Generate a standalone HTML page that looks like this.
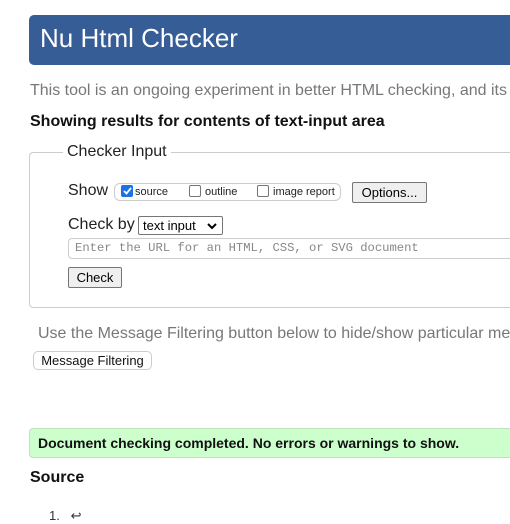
<!DOCTYPE html>
<html><head><style>
body{margin:0;width:510px;height:523px;overflow:hidden;background:#fff;font-family:"Liberation Sans",Arial,sans-serif;position:relative}
.a{position:absolute;white-space:nowrap}
.hdr{left:29px;top:15px;width:500px;height:50px;background:#365d96;border-radius:5px 0 0 5px}
.btn{position:absolute;background:#efefef;border:1px solid #767676;border-radius:2px;font-size:13px;color:#000;text-align:center;box-sizing:border-box}
.cb{position:absolute;width:12px;height:12px;border:1px solid #767676;border-radius:2px;background:#fff;box-sizing:border-box}
</style></head><body>
<div class="a hdr"></div>
<div class="a" style="left:40px;top:23px;font-size:26px;color:#fff">Nu Html Checker</div>
<div class="a" style="left:30px;top:82px;font-size:16px;color:#777">This tool is an ongoing experiment in better HTML checking, and its</div>
<div class="a" style="left:30px;top:113px;font-size:16px;font-weight:bold;color:#111">Showing results for contents of text-input area</div>
<div class="a" style="left:29px;top:152px;width:500px;height:156px;border:1px solid #ccc;border-right:none;border-radius:4px 0 0 4px;box-sizing:border-box"></div>
<div class="a" style="left:63px;top:143px;background:#fff;padding:0 4px;font-size:16px;color:#222">Checker Input</div>
<div class="a" style="left:68px;top:182px;font-size:16px;color:#222">Show</div>
<div class="a" style="left:114px;top:183px;width:227px;height:18px;border:1px solid #ccc;border-radius:6px;box-sizing:border-box"></div>
<div class="cb" style="left:121px;top:185px;background:#1a73e8;border-color:#1a73e8"><svg width="10" height="10" style="position:absolute;left:0;top:0"><path d="M2 5 L4.5 7.5 L9 2" stroke="#fff" stroke-width="1.8" fill="none"/></svg></div>
<div class="a" style="left:135px;top:186px;font-size:11px;color:#222">source</div>
<div class="cb" style="left:189px;top:185px"></div>
<div class="a" style="left:205px;top:186px;font-size:11px;color:#222">outline</div>
<div class="cb" style="left:257px;top:185px"></div>
<div class="a" style="left:273px;top:186px;font-size:11px;color:#222">image report</div>
<div class="btn" style="left:352px;top:182px;width:75px;height:21px;line-height:19px">Options...</div>
<div class="a" style="left:68px;top:216px;font-size:16px;color:#222">Check by</div>
<div class="a" style="left:138px;top:216px;width:85px;height:19px;border:1px solid #767676;border-radius:2px;box-sizing:border-box;font-size:13px;padding-left:4px;line-height:17px">text input<svg width="10" height="7" style="position:absolute;right:5px;top:6px"><path d="M1 1 L5 5 L9 1" stroke="#000" stroke-width="2" fill="none"/></svg></div>
<div class="a" style="left:68px;top:238px;width:460px;height:21px;border:1px solid #ccc;border-radius:4px;box-sizing:border-box;font-family:'Liberation Mono',monospace;font-size:12.2px;color:#888;padding-left:6px;line-height:19px">Enter the URL for an HTML, CSS, or SVG document</div>
<div class="btn" style="left:68px;top:267px;width:54px;height:21px;line-height:19px">Check</div>
<div class="a" style="left:38px;top:325px;font-size:16px;color:#777">Use the Message Filtering button below to hide/show particular me</div>
<div class="a" style="left:33px;top:351px;width:119px;height:19px;border:1px solid #ccc;border-radius:5px;box-sizing:border-box;font-size:13px;color:#111;text-align:center;line-height:17px">Message Filtering</div>
<div class="a" style="left:29px;top:428px;width:500px;height:30px;background:#ccffcc;border:1px solid #bde5bd;border-radius:4px 0 0 4px;box-sizing:border-box"></div>
<div class="a" style="left:38px;top:435px;font-size:14px;font-weight:bold;color:#111">Document checking completed. No errors or warnings to show.</div>
<div class="a" style="left:30px;top:469px;font-size:16px;font-weight:bold;color:#111">Source</div>
<div class="a" style="left:49px;top:508px;font-size:13px;color:#333">1.&nbsp;&nbsp;&nbsp;↩</div>
</body></html>
